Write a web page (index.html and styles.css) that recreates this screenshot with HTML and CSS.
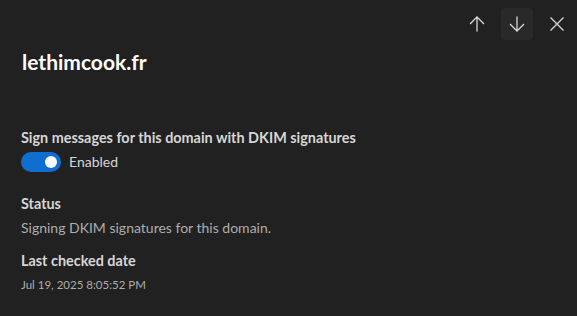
FILE: index.html
```html
<!DOCTYPE html>
<html>
<head>
<meta charset="utf-8">
<link rel="stylesheet" href="styles.css">
</head>
<body>
<div class="panel">
  <div class="toolbar">
    <button class="icon-btn" aria-label="Previous">
      <svg width="16" height="16" viewBox="0 0 16 16"><path d="M8 15.5V1M1 8L8 1l7 7" fill="none" stroke="#d6d6d6" stroke-width="1.3"/></svg>
    </button>
    <button class="icon-btn hover" aria-label="Next">
      <svg width="16" height="16" viewBox="0 0 16 16"><path d="M8 0.5V15M1 8l7 7 7-7" fill="none" stroke="#d6d6d6" stroke-width="1.3"/></svg>
    </button>
    <button class="icon-btn" aria-label="Close">
      <svg width="16" height="16" viewBox="0 0 16 16"><path d="M1.5 1.5l13 13M14.5 1.5l-13 13" fill="none" stroke="#d6d6d6" stroke-width="1.3"/></svg>
    </button>
  </div>
  <h1 class="title">lethimcook.fr</h1>
  <div class="section first">
    <div class="label">Sign messages for this domain with DKIM signatures</div>
    <div class="toggle-row">
      <span class="toggle"><span class="knob"></span></span>
      <span class="toggle-text">Enabled</span>
    </div>
  </div>
  <div class="section status">
    <div class="label">Status</div>
    <div class="value">Signing DKIM signatures for this domain.</div>
  </div>
  <div class="section checked">
    <div class="label">Last checked date</div>
    <div class="value small">Jul 19, 2025 8:05:52 PM</div>
  </div>
</div>
</body>
</html>
```
FILE: styles.css
```css
html, body {
  margin: 0;
  padding: 0;
  background: #212121;
  font-family: "Segoe UI", "Lato", "Open Sans", sans-serif;
}
.panel {
  width: 577px;
  height: 316px;
  box-sizing: border-box;
  padding: 8px 21px 0 21px;
}
.toolbar {
  display: flex;
  justify-content: flex-end;
  gap: 8px;
  margin-right: -17px;
}
.icon-btn {
  width: 32px;
  height: 32px;
  border: none;
  border-radius: 4px;
  background: transparent;
  display: flex;
  align-items: center;
  justify-content: center;
  padding: 0;
}
.icon-btn.hover {
  background: #292929;
}
.title {
  margin: 8px 0 0 1px;
  font-size: 21px;
  font-weight: 700;
  color: #ffffff;
  line-height: 28px;
}
.section.first {
  margin-top: 52px;
}
.section.status {
  margin-top: 22px;
}
.section.checked {
  margin-top: 13px;
}
.label {
  font-size: 14.4px;
  font-weight: 700;
  color: #d6d6d6;
  line-height: 20px;
}
.toggle-row {
  display: flex;
  align-items: center;
  gap: 8px;
  margin-top: 4px;
}
.toggle {
  width: 40px;
  height: 20px;
  border-radius: 10px;
  background: #0f6fd0;
  position: relative;
  display: inline-block;
}
.knob {
  position: absolute;
  right: 4px;
  top: 4px;
  width: 12px;
  height: 12px;
  border-radius: 50%;
  background: #ffffff;
}
.toggle-text {
  font-size: 14px;
  line-height: 20px;
  color: #d6d6d6;
}
.value {
  margin-top: 4px;
  font-size: 14px;
  color: #adadad;
  line-height: 20px;
}
.value.small {
  font-size: 11.5px;
  line-height: 16px;
  margin-top: 6px;
}
```
